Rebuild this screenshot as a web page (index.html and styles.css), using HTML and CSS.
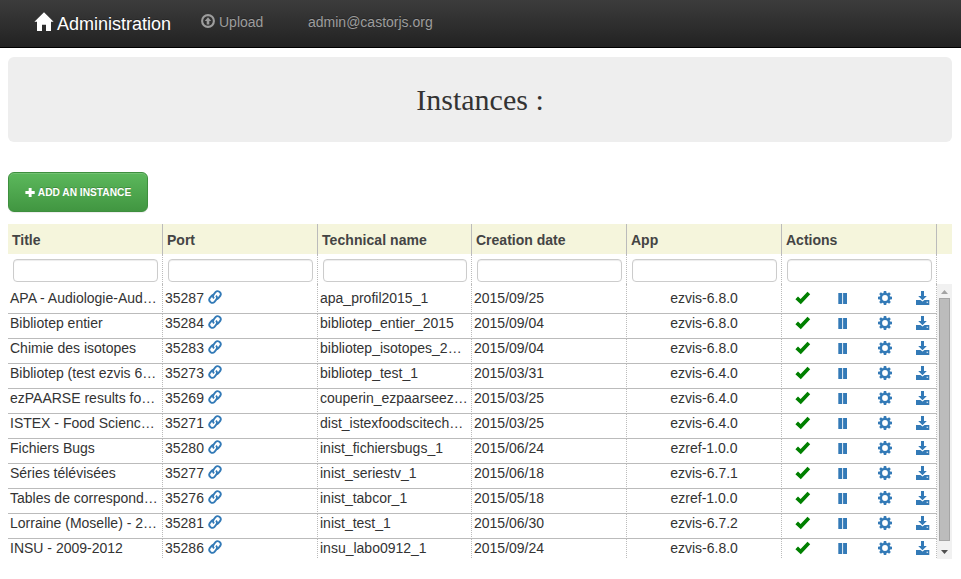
FILE: index.html
```html
<!DOCTYPE html>
<html lang="en">
<head>
<meta charset="utf-8">
<title>Administration</title>
<link rel="stylesheet" href="styles.css">
</head>
<body>
<svg class="defs" width="0" height="0">
  <symbol id="link" viewBox="0 0 14 14"><g fill="none" stroke="currentColor" stroke-width="1.9"><path d="M6 8.3Q4.2 6.4 5.4 4.7L7.5 2.1Q9.2.3 11.4 1.8Q13.6 3.5 12.4 5.6L10.2 8.3Q9.3 9.2 7.7 8.8"/><path d="M8 5.7Q9.8 7.6 8.6 9.3L6.5 11.9Q4.8 13.7 2.6 12.2Q.4 10.5 1.6 8.4L3.8 5.7Q4.7 4.8 6.3 5.2"/></g></symbol>
  <symbol id="check" viewBox="0 0 16 14"><path fill="currentColor" d="M.4 8.2 3 5.5 5.6 7.9 12.5.7 15.2 3.3 5.8 13.2Z"/></symbol>
  <symbol id="pause" viewBox="0 0 10 12"><path fill="currentColor" d="M.3 0h3.9v11H.3ZM5.1 0H9v11H5.1Z"/></symbol>
  <symbol id="cog" viewBox="0 0 14 14"><g fill="currentColor"><path fill-rule="evenodd" d="M7 1.8a5.2 5.2 0 1 0 0 10.4A5.2 5.2 0 0 0 7 1.8Zm0 2.3a2.9 2.9 0 1 1 0 5.8 2.9 2.9 0 0 1 0-5.8Z"/><path id="tooth" d="M5.8 0h2.4l.5 3H5.3Z"/><use href="#tooth" transform="rotate(45 7 7)"/><use href="#tooth" transform="rotate(90 7 7)"/><use href="#tooth" transform="rotate(135 7 7)"/><use href="#tooth" transform="rotate(180 7 7)"/><use href="#tooth" transform="rotate(225 7 7)"/><use href="#tooth" transform="rotate(270 7 7)"/><use href="#tooth" transform="rotate(315 7 7)"/></g></symbol>
  <symbol id="save" viewBox="0 0 14 14"><path fill="currentColor" d="M5 0h3v5h2.8L6.5 9.3 2.2 5H5Z"/><path fill="currentColor" fill-rule="evenodd" d="M0 9h4.5l2 1.5 2-1.5h4.8v5H0ZM10.6 10.7v1h1.5v-1Z"/></symbol>
</svg>
<nav class="navbar">
  <a class="brand"><svg class="home" viewBox="0 0 20 19"><path fill="currentColor" d="M10 .3 19.6 9.8H17V19H12V12.7H8V19H3V9.8H.4Z"/></svg>Administration</a>
  <a class="upload"><svg class="up" viewBox="0 0 14 14"><circle cx="7" cy="7" r="5.9" fill="none" stroke="currentColor" stroke-width="2.1"/><path fill="currentColor" d="M7 3.2 10.2 6.9H8.3V10.5H5.7V6.9H3.8Z"/></svg>Upload</a>
  <a class="user">admin@castorjs.org</a>
</nav>
<header class="banner"><h1>Instances :</h1></header>
<button class="add"><svg class="plus" viewBox="0 0 10 10"><path fill="currentColor" d="M3.7 0h2.9v3.1h3.1V6H6.6v3.1H3.7V6H.4V3.1h3.3Z"/></svg>ADD AN INSTANCE</button>
<main class="grid">
  <div class="row head"><div>Title</div><div>Port</div><div>Technical name</div><div>Creation date</div><div>App</div><div>Actions</div></div>
  <div class="row filters"><div><input></div><div><input></div><div><input></div><div><input></div><div><input></div><div><input></div></div>
  <div class="viewport">
    <div class="rows" id="rows"></div>
    <div class="scroll"><i class="arrow up-arrow"></i><i class="thumb"></i><i class="arrow down-arrow"></i></div>
  </div>
</main>
<script src="grid.js"></script>
</body>
</html>
```
FILE: styles.css
```css
* { box-sizing: border-box; }
body { margin: 0; background: #fff; color: #333; font: 14px/20px "Liberation Sans", Arial, sans-serif; overflow: hidden; }
svg { display: block; flex: none; }
.defs { position: absolute; }
.navbar { height: 48px; display: flex; align-items: flex-start; background: linear-gradient(#3c3c3c, #222); border-bottom: 1px solid #000; color: #9d9d9d; text-shadow: 0 -1px 0 rgba(0,0,0,.25); }
.navbar a { display: flex; }
.brand { margin-left: 34px; width: 167px; padding-top: 14px; color: #fff; font-size: 18px; }
.home { width: 20px; height: 19px; margin: -2px 3px 0 0; }
.upload { padding-top: 12px; width: 107px; }
.up { width: 14px; height: 14px; margin: 2px 4px 0 0; }
.user { padding-top: 12px; }
.banner { height: 85px; margin: 9px 9px 0 8px; border-radius: 6px; background: #eee; }
h1 { margin: 0; padding-top: 26px; text-align: center; font: 30px/34px "Liberation Serif", serif; }
.add { display: flex; align-items: center; justify-content: center; width: 140px; height: 40px; margin: 30px 0 12px 8px; padding: 1px 0 0; border: 1px solid #3e8f3e; border-radius: 6px; background: linear-gradient(#5cb85c, #419641); box-shadow: inset 0 1px 0 rgba(255,255,255,.15), 0 1px 1px rgba(0,0,0,.075); color: #fff; font: bold 10.2px/14px "Liberation Sans", sans-serif; text-shadow: 0 -1px 0 rgba(0,0,0,.2); }
.plus { width: 10px; height: 10px; margin-right: 3px; }
.grid { width: 944px; margin-left: 8px; }
.row { display: grid; grid-template-columns: 155px 155px 154px 155px 155px 155px; }
.head { height: 30px; background: beige; font-weight: bold; color: #444; }
.head div { padding: 6px 4px; border-right: 1px solid #bbb; }
.head div:nth-child(3) { letter-spacing: .06px; }
.filters { height: 30px; }
.filters div { padding: 5px 4px 0 5px; border-right: 1px dotted #bbb; }
input { display: block; width: 100%; height: 23px; border: 1px solid #ccc; border-radius: 4px; box-shadow: inset 0 1px 1px rgba(0,0,0,.075); background: #fff; }
.viewport { display: flex; height: 275px; overflow: hidden; }
.rows { width: 929px; }
.data { height: 25px; }
.rows .data:first-child { height: 30px; }
.rows .data:first-child > div { padding-top: 5px; }
.data > div { border-right: 1px dotted #bbb; border-bottom: 1px solid #bbb; padding: 0 0 0 2px; line-height: 18px; white-space: nowrap; }
.data .port { display: flex; }
.link { width: 14px; height: 14px; margin: 1px 0 0 4px; color: #337ab7; }
.data .app { padding-right: 2px; text-align: center; }
.data .actions { display: flex; color: #337ab7; }
.check { width: 16px; height: 14px; margin: 2px 27px 0 11px; color: green; }
.pause { width: 10px; height: 12px; margin: 4px 30px 0 0; }
.cog { width: 14px; height: 14px; margin: 2px 24px 0 0; }
.save { width: 14px; height: 14px; margin-top: 2px; }
.scroll { width: 15px; height: 275px; background: #f1f1f1; display: flex; flex-direction: column; align-items: center; }
.thumb { width: 11px; height: 243px; background: #bcbcbc; border: 1px solid #a5a5a5; }
.arrow { height: 14px; width: 15px; background: #a3a3a3; clip-path: polygon(4px 10px, 7.5px 6px, 11px 10px); }
.down-arrow { height: 18px; background: #505050; clip-path: polygon(4px 9px, 11px 9px, 7.5px 13px); }
```
FILE: grid.js
```js
const instances = [
  ["APA - Audiologie-Aud…", 35287, "apa_profil2015_1", "2015/09/25", "ezvis-6.8.0"],
  ["Bibliotep entier", 35284, "bibliotep_entier_2015", "2015/09/04", "ezvis-6.8.0"],
  ["Chimie des isotopes", 35283, "bibliotep_isotopes_2…", "2015/09/04", "ezvis-6.8.0"],
  ["Bibliotep (test ezvis 6…", 35273, "bibliotep_test_1", "2015/03/31", "ezvis-6.4.0"],
  ["ezPAARSE results fo…", 35269, "couperin_ezpaarseez…", "2015/03/25", "ezvis-6.4.0"],
  ["ISTEX - Food Scienc…", 35271, "dist_istexfoodscitech…", "2015/03/25", "ezvis-6.4.0"],
  ["Fichiers Bugs", 35280, "inist_fichiersbugs_1", "2015/06/24", "ezref-1.0.0"],
  ["Séries télévisées", 35277, "inist_seriestv_1", "2015/06/18", "ezvis-6.7.1"],
  ["Tables de correspond…", 35276, "inist_tabcor_1", "2015/05/18", "ezref-1.0.0"],
  ["Lorraine (Moselle) - 2…", 35281, "inist_test_1", "2015/06/30", "ezvis-6.7.2"],
  ["INSU - 2009-2012", 35286, "insu_labo0912_1", "2015/09/24", "ezvis-6.8.0"]
];
const icon = name => `<svg class="${name}"><use href="#${name}"></use></svg>`;
document.getElementById("rows").innerHTML = instances.map(([title, port, name, date, app]) =>
  `<div class="row data"><div>${title}</div><div class="port">${port}${icon("link")}</div><div>${name}</div><div>${date}</div><div class="app">${app}</div><div class="actions">${["check", "pause", "cog", "save"].map(icon).join("")}</div></div>`
).join("");
```
